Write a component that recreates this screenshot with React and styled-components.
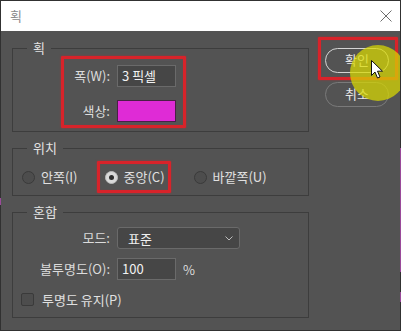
import React from 'react';
import styled, { createGlobalStyle } from 'styled-components';

const GlobalStyle = createGlobalStyle`
  html, body {
    margin: 0;
    padding: 0;
  }
  body {
    background: #2f2f2f;
    font-family: "Noto Sans CJK KR", "Noto Sans", sans-serif;
  }
`;

const Frame = styled.div`
  width: 401px;
  height: 331px;
  box-sizing: border-box;
  padding: 1px 1px 1px 1px;
  background:
    linear-gradient(to bottom, transparent 198px, #9a4a9a 198px, #9a4a9a 205px, transparent 205px) left top / 1px 100% no-repeat,
    linear-gradient(to bottom, transparent 148px, #9a4a9a 148px, #9a4a9a 272px, transparent 272px, transparent 292px, #9a4a9a 292px, #9a4a9a 302px, transparent 302px) right top / 1px 100% no-repeat,
    #313131;
`;

const Window = styled.div`
  position: relative;
  width: 399px;
  height: 329px;
  display: flex;
  flex-direction: column;
  overflow: hidden;
  background: #535353;
`;

const TitleBar = styled.div`
  height: 30px;
  flex: none;
  background: #fff;
  display: flex;
  align-items: center;
  justify-content: space-between;
  padding: 0 8px 0 9px;
`;

const Title = styled.span`
  font-size: 13px;
  line-height: 16px;
  color: #8a8a8a;
`;

const Body = styled.div`
  flex: 1;
  display: flex;
  gap: 9px;
  padding: 8px 0 0 11px;
`;

const LeftColumn = styled.div`
  width: 297px;
  padding-top: 2px;
  display: flex;
  flex-direction: column;
  gap: 9px;
`;

const Group = styled.fieldset`
  margin: 0;
  min-width: 0;
  box-sizing: border-box;
  width: 297px;
  border: 1px solid #3d3d3d;
  padding: ${(p) => p.$pad};
`;

const Legend = styled.legend`
  margin-left: 14px;
  padding: 0 6px;
  font-size: 13px;
  line-height: 14px;
  color: #e2e2e2;
`;

const Highlight = styled.div`
  border: 3px solid #d8232a;
  box-shadow: 0 0 2px rgba(220, 30, 40, 0.7), inset 0 0 1px rgba(220, 30, 40, 0.6);
  border-radius: 1px;
`;

const StrokeBox = styled(Highlight)`
  margin: 1px 0 0 48px;
  width: 125px;
  box-sizing: border-box;
  padding: 6px 7px 3px 0;
  display: flex;
  flex-direction: column;
  gap: 13px;
`;

const FieldRow = styled.div`
  display: flex;
  align-items: center;
  gap: 7px;
  height: 22px;
  margin-top: ${(p) => p.$top || 0}px;
`;

const Label = styled.span`
  width: ${(p) => p.$w}px;
  flex: none;
  text-align: right;
  font-size: 13px;
  line-height: 16px;
  color: #dcdcdc;
  white-space: nowrap;
`;

const TextBox = styled.div`
  width: 59px;
  height: 22px;
  box-sizing: border-box;
  background: #464646;
  border: 1px solid #6a6a6a;
  padding-left: 4px;
  font-size: 13px;
  line-height: 20px;
  color: #f2f2f2;
`;

const Swatch = styled.div`
  width: 59px;
  height: 22px;
  box-sizing: border-box;
  background: #df2bd6;
  border: 1px solid #4a2046;
`;

const Select = styled.div`
  width: 123px;
  height: 22px;
  box-sizing: border-box;
  background: #464646;
  border: 1px solid #6a6a6a;
  border-radius: 3px;
  padding: 0 6px 0 10px;
  display: flex;
  align-items: center;
  justify-content: space-between;
  font-size: 13px;
  color: #f0f0f0;
`;

const Unit = styled.span`
  font-size: 13px;
  color: #dcdcdc;
`;

const RadioRow = styled.div`
  display: flex;
  align-items: center;
  margin-top: 6px;
  padding-left: 9px;
`;

const RadioBox = styled(Highlight)`
  margin-left: ${(p) => p.$left}px;
  padding: 5px 3px 5px 5px;
`;

const RadioItem = styled.label`
  display: flex;
  align-items: center;
  gap: 6px;
  height: 16px;
  margin-left: ${(p) => p.$left || 0}px;
  font-size: 13px;
  line-height: 16px;
  color: #e0e0e0;
  white-space: nowrap;
`;

const RadioDot = styled.span`
  width: 13px;
  height: 13px;
  box-sizing: border-box;
  border-radius: 50%;
  flex: none;
  border: 1px solid ${(p) => (p.$on ? '#bdbdbd' : '#3a3a3a')};
  background: ${(p) => (p.$on ? '#dadada' : '#4d4d4d')};
  display: flex;
  align-items: center;
  justify-content: center;
  &::after {
    content: '';
    display: ${(p) => (p.$on ? 'block' : 'none')};
    width: 5px;
    height: 5px;
    border-radius: 50%;
    background: #2e2e2e;
  }
`;

const CheckRow = styled.label`
  display: flex;
  align-items: center;
  gap: 8px;
  height: 13px;
  margin-top: 13px;
  padding-left: 8px;
  font-size: 13px;
  line-height: 13px;
  color: #e0e0e0;
`;

const CheckBox = styled.span`
  width: 13px;
  height: 13px;
  box-sizing: border-box;
  flex: none;
  border: 1px solid #3a3a3a;
  border-radius: 2px;
  background: #4d4d4d;
`;

const RightColumn = styled.div`
  margin-top: -2px;
  display: flex;
  flex-direction: column;
  align-items: flex-start;
`;

const OkBox = styled(Highlight)`
  padding: 6px 6px 4px 4px;
`;

const Button = styled.button`
  width: 64px;
  height: 25px;
  box-sizing: border-box;
  border-radius: 13px;
  background: transparent;
  border: ${(p) => (p.$primary ? '1.5px solid #d4d4d4' : '1px solid #7a7a7a')};
  font-family: inherit;
  font-size: 13px;
  line-height: 16px;
  color: #e8e8e8;
  padding: 0;
  margin: ${(p) => p.$margin || 0};
`;

const Spot = styled.div`
  position: absolute;
  left: 349px;
  top: 44px;
  width: 56px;
  height: 56px;
  border-radius: 50%;
  background: rgba(218, 218, 0, 0.72);
  pointer-events: none;
`;

const Cursor = styled.svg`
  position: absolute;
  left: 370px;
  top: 59px;
`;

export default function App() {
  return (
    <>
      <GlobalStyle />
      <Frame>
        <Window>
          <TitleBar>
            <Title>획</Title>
            <svg width="12" height="12" viewBox="0 0 12 12">
              <path d="M0.5 0.5 L11.5 11.5 M11.5 0.5 L0.5 11.5" stroke="#6e6e6e" strokeWidth="1" fill="none" />
            </svg>
          </TitleBar>
          <Body>
            <LeftColumn>
              <Group $pad="0 0 3px 0">
                <Legend>획</Legend>
                <StrokeBox>
                  <FieldRow>
                    <Label $w={46}>폭(W):</Label>
                    <TextBox>3 픽셀</TextBox>
                  </FieldRow>
                  <FieldRow>
                    <Label $w={46}>색상:</Label>
                    <Swatch />
                  </FieldRow>
                </StrokeBox>
              </Group>

              <Group $pad="0 0 2px 0">
                <Legend>위치</Legend>
                <RadioRow>
                  <RadioItem>
                    <RadioDot />
                    안쪽(I)
                  </RadioItem>
                  <RadioBox $left={19}>
                    <RadioItem>
                      <RadioDot $on />
                      중앙(C)
                    </RadioItem>
                  </RadioBox>
                  <RadioItem $left={23}>
                    <RadioDot />
                    바깥쪽(U)
                  </RadioItem>
                </RadioRow>
              </Group>

              <Group $pad="8px 0 11px 0">
                <Legend>혼합</Legend>
                <FieldRow>
                  <Label $w={97}>모드:</Label>
                  <Select>
                    표준
                    <svg width="8" height="5" viewBox="0 0 8 5">
                      <path d="M0.5 0.5 L4 4 L7.5 0.5" stroke="#bdbdbd" strokeWidth="1" fill="none" />
                    </svg>
                  </Select>
                </FieldRow>
                <FieldRow $top={9}>
                  <Label $w={97}>불투명도(O):</Label>
                  <TextBox>100</TextBox>
                  <Unit>%</Unit>
                </FieldRow>
                <CheckRow>
                  <CheckBox />
                  투명도 유지(P)
                </CheckRow>
              </Group>
            </LeftColumn>

            <RightColumn>
              <OkBox>
                <Button $primary>확인</Button>
              </OkBox>
              <Button $margin="2px 0 0 7px">취소</Button>
            </RightColumn>
          </Body>
          <Spot />
          <Cursor width="13" height="20" viewBox="0 0 13 20">
            <path
              d="M0.5 0.5 L0.5 15.5 L4 12 L6.5 18 L9 17 L6.5 11.2 L11.5 11.2 Z"
              fill="#fff"
              stroke="#111"
              strokeWidth="1"
              strokeLinejoin="round"
            />
          </Cursor>
        </Window>
      </Frame>
    </>
  );
}
